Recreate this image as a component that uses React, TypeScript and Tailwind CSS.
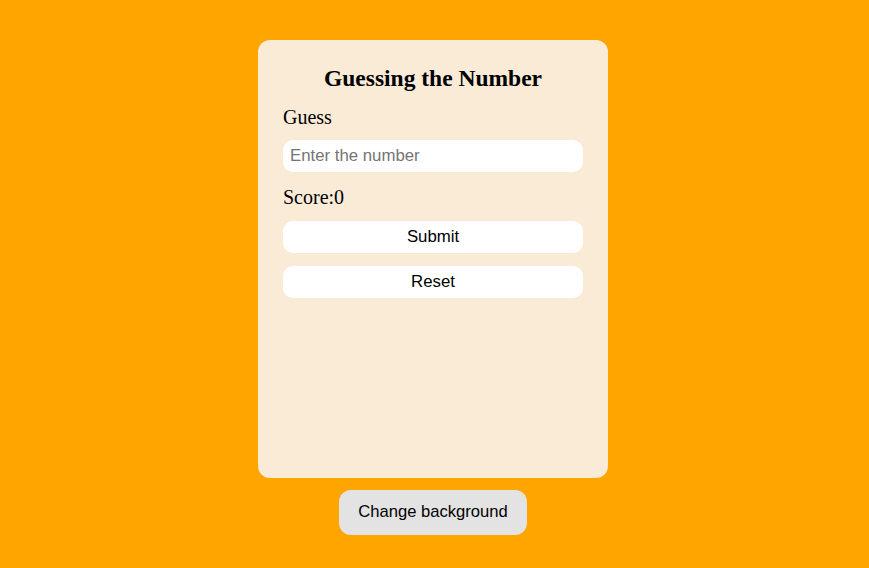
import React, { useState } from 'react';

export default function App() {
    const [guess, setGuess] = useState('');
    const [score, setScore] = useState(0);
    const [bg, setBg] = useState('bg-[#ffa500]');

    return (
        <div className={`min-h-[568px] w-full ${bg} flex flex-col items-center pt-10 pr-[3px]`}>
            {/* Game card */}
            <div className="w-[350px] h-[438px] bg-[#faebd7] rounded-xl px-[25px] pt-[23px] flex flex-col font-['Liberation_Serif',serif] text-black">
                <h1 className="text-center text-[23.5px] font-bold leading-[30px]">Guessing the Number</h1>
                <label className="text-[20px] leading-[24px] mt-[12px]">Guess</label>
                <input
                    type="text"
                    placeholder="Enter the number"
                    value={guess}
                    onChange={(e) => setGuess(e.target.value)}
                    className="mt-[11px] h-8 w-full bg-white rounded-[10px] px-[7px] text-[16.8px] font-['Liberation_Sans',sans-serif] placeholder:text-[#757575] outline-none"
                />
                <p className="text-[20px] leading-[24px] mt-[13px]">Score:{score}</p>
                <button
                    onClick={() => setScore(s => s + 1)}
                    className="mt-[12px] h-8 w-full bg-white rounded-[10px] text-[16.8px] font-['Liberation_Sans',sans-serif]"
                >
                    Submit
                </button>
                <button
                    onClick={() => { setScore(0); setGuess(''); }}
                    className="mt-[13px] h-8 w-full bg-white rounded-[10px] text-[16.8px] font-['Liberation_Sans',sans-serif]"
                >
                    Reset
                </button>
            </div>

            <button
                onClick={() => setBg(b => b === 'bg-[#ffa500]' ? 'bg-[#87ceeb]' : 'bg-[#ffa500]')}
                className="mt-3 w-[188px] h-[45px] bg-[#e3e3e3] rounded-xl text-[16.6px] font-['Liberation_Sans',sans-serif] text-black"
            >
                Change background
            </button>
        </div>
    );
}
